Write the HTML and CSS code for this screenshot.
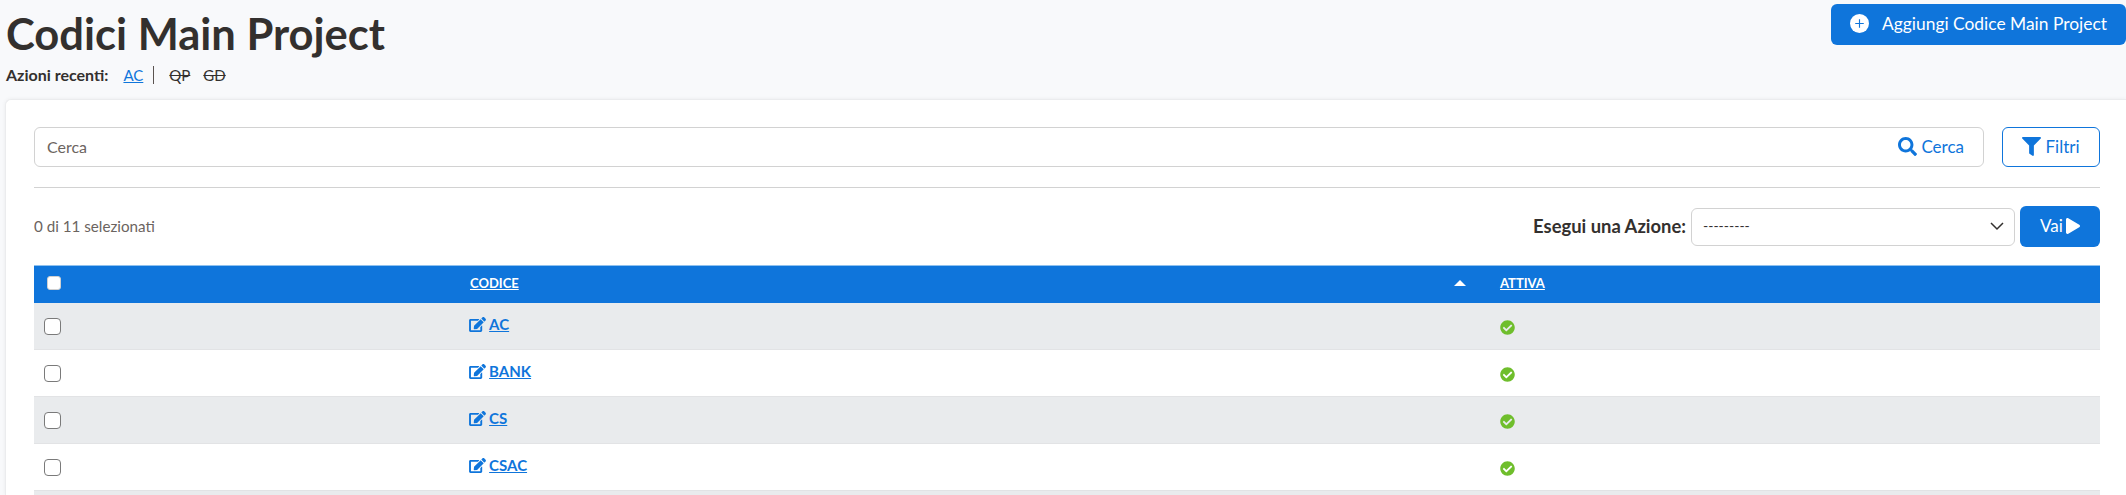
FILE: index.html
```html
<!DOCTYPE html>
<html lang="it">

<head>
    <meta charset="UTF-8">
    <title>Codici Main Project</title>
    <link rel="stylesheet" href="styles.css">
</head>

<body>
    <header class="page-head">
        <div class="page-title">
            <h1>Codici Main Project</h1>
            <div class="recent">
                <b>Azioni recenti:</b>
                <a href="#">AC</a>
                <span class="sep"></span>
                <s>QP</s>
                <s>GD</s>
            </div>
        </div>
        <a class="btn btn-add" href="#">
            <svg class="icon-plus" viewBox="0 0 20 20"><circle cx="10" cy="10" r="10" fill="#fff"/><path d="M10 5.500v9M5.500 10h9" stroke="#0f75db" stroke-width="1.200" fill="none"/></svg>
            Aggiungi Codice Main Project
        </a>
    </header>

    <main class="card">
        <div class="search-row">
            <div class="search-box">
                <span class="search-text">Cerca</span>
                <span class="search-go">
                    <svg class="icon" viewBox="0 0 512 512"><path d="M505 442.700L405.300 343c-4.500-4.500-10.600-7-17-7H372c27.600-35.300 44-79.700 44-128C416 93.100 322.900 0 208 0S0 93.100 0 208s93.100 208 208 208c48.300 0 92.700-16.400 128-44v16.300c0 6.400 2.500 12.500 7 17l99.700 99.700c9.400 9.400 24.600 9.400 33.900 0l28.300-28.300c9.400-9.400 9.400-24.600.1-34zM208 336c-70.700 0-128-57.200-128-128 0-70.700 57.200-128 128-128 70.700 0 128 57.200 128 128 0 70.700-57.200 128-128 128z"/></svg>
                    Cerca
                </span>
            </div>
            <a class="btn btn-filter" href="#">
                <svg class="icon" viewBox="0 0 512 512"><path d="M487.976 0H24.028C2.710 0-8.047 25.866 7.058 40.971L192 225.941V432c0 7.831 3.821 15.170 10.237 19.662l80 55.980C298.020 518.690 320 507.493 320 487.980V225.941l184.947-184.970C520.021 25.896 509.338 0 487.976 0z"/></svg>
                Filtri
            </a>
        </div>

        <div class="action-row">
            <span class="count">0 di 11 selezionati</span>
            <div class="action-form">
                <label for="azione">Esegui una Azione:</label>
                <select id="azione">
                    <option>---------</option>
                </select>
                <a class="btn btn-go" href="#">
                    Vai
                    <svg class="icon-play" viewBox="0 0 448 512"><path d="M424.400 214.700L72.400 6.600C43.800-10.300 0 6.100 0 47.900V464c0 37.500 40.700 60.100 72.400 41.300l352-208c31.400-18.500 31.500-64.100 0-82.600z"/></svg>
                </a>
            </div>
        </div>

        <table class="list">
            <colgroup>
                <col class="col-check">
                <col class="col-code">
                <col>
            </colgroup>
            <thead>
                <tr>
                    <th><input type="checkbox" class="check check-all"></th>
                    <th><div class="sort-cell"><a href="#">Codice</a><span class="caret"></span></div></th>
                    <th><a href="#">Attiva</a></th>
                </tr>
            </thead>
            <tbody>
                <tr>
                    <td><input type="checkbox" class="check"></td>
                    <td><a class="code-link" href="#"><svg class="icon-edit" viewBox="0 0 576 512"><path d="M402.600 83.200l90.200 90.200c3.800 3.800 3.800 10 0 13.800L274.400 405.600l-92.800 10.300c-12.400 1.400-22.900-9.100-21.500-21.500l10.300-92.800L388.800 83.200c3.800-3.800 10-3.800 13.800 0zm162-22.900l-48.800-48.800c-15.200-15.200-39.900-15.200-55.200 0l-35.400 35.400c-3.800 3.800-3.800 10 0 13.800l90.200 90.200c3.800 3.800 10 3.800 13.800 0l35.400-35.400c15.200-15.300 15.200-40 0-55.200zM384 346.200V448H64V128h229.800c3.200 0 6.200-1.300 8.500-3.500l40-40c7.600-7.600 2.200-20.500-8.500-20.500H48C21.500 64 0 85.500 0 112v352c0 26.500 21.500 48 48 48h352c26.500 0 48-21.500 48-48V306.200c0-10.700-12.900-16-20.500-8.500l-40 40c-2.200 2.300-3.500 5.300-3.500 8.500z"/></svg></a> <a class="code-link code-name" href="#">AC</a></td>
                    <td><svg class="icon-ok" viewBox="0 0 512 512"><path d="M504 256c0 136.967-111.033 248-248 248S8 392.967 8 256 119.033 8 256 8s248 111.033 248 248zM227.314 387.314l184-184c6.248-6.248 6.248-16.379 0-22.627l-22.627-22.627c-6.248-6.249-16.379-6.249-22.628 0L216 308.118l-70.059-70.059c-6.248-6.248-16.379-6.248-22.628 0l-22.627 22.627c-6.248 6.248-6.248 16.379 0 22.627l104 104c6.249 6.250 16.379 6.250 22.628.001z"/></svg></td>
                </tr>
                <tr>
                    <td><input type="checkbox" class="check"></td>
                    <td><a class="code-link" href="#"><svg class="icon-edit" viewBox="0 0 576 512"><path d="M402.600 83.200l90.200 90.200c3.800 3.800 3.800 10 0 13.800L274.400 405.600l-92.800 10.300c-12.400 1.400-22.900-9.100-21.500-21.500l10.300-92.800L388.800 83.200c3.800-3.800 10-3.800 13.800 0zm162-22.900l-48.800-48.800c-15.200-15.200-39.900-15.200-55.200 0l-35.400 35.400c-3.800 3.800-3.800 10 0 13.800l90.200 90.200c3.800 3.800 10 3.800 13.800 0l35.400-35.400c15.200-15.300 15.200-40 0-55.200zM384 346.200V448H64V128h229.800c3.200 0 6.200-1.300 8.500-3.500l40-40c7.600-7.600 2.200-20.500-8.500-20.500H48C21.500 64 0 85.500 0 112v352c0 26.500 21.500 48 48 48h352c26.500 0 48-21.500 48-48V306.200c0-10.700-12.900-16-20.500-8.500l-40 40c-2.200 2.300-3.500 5.300-3.500 8.500z"/></svg></a> <a class="code-link code-name" href="#">BANK</a></td>
                    <td><svg class="icon-ok" viewBox="0 0 512 512"><path d="M504 256c0 136.967-111.033 248-248 248S8 392.967 8 256 119.033 8 256 8s248 111.033 248 248zM227.314 387.314l184-184c6.248-6.248 6.248-16.379 0-22.627l-22.627-22.627c-6.248-6.249-16.379-6.249-22.628 0L216 308.118l-70.059-70.059c-6.248-6.248-16.379-6.248-22.628 0l-22.627 22.627c-6.248 6.248-6.248 16.379 0 22.627l104 104c6.249 6.250 16.379 6.250 22.628.001z"/></svg></td>
                </tr>
                <tr>
                    <td><input type="checkbox" class="check"></td>
                    <td><a class="code-link" href="#"><svg class="icon-edit" viewBox="0 0 576 512"><path d="M402.600 83.200l90.200 90.200c3.800 3.800 3.800 10 0 13.800L274.400 405.600l-92.800 10.300c-12.400 1.400-22.900-9.100-21.500-21.500l10.300-92.800L388.800 83.200c3.800-3.800 10-3.800 13.800 0zm162-22.900l-48.800-48.800c-15.200-15.200-39.900-15.200-55.200 0l-35.400 35.400c-3.800 3.800-3.800 10 0 13.800l90.200 90.200c3.800 3.800 10 3.800 13.800 0l35.400-35.400c15.200-15.300 15.200-40 0-55.200zM384 346.200V448H64V128h229.800c3.200 0 6.200-1.300 8.500-3.500l40-40c7.600-7.600 2.200-20.500-8.500-20.500H48C21.500 64 0 85.500 0 112v352c0 26.500 21.500 48 48 48h352c26.500 0 48-21.500 48-48V306.200c0-10.700-12.900-16-20.500-8.500l-40 40c-2.200 2.300-3.500 5.300-3.500 8.500z"/></svg></a> <a class="code-link code-name" href="#">CS</a></td>
                    <td><svg class="icon-ok" viewBox="0 0 512 512"><path d="M504 256c0 136.967-111.033 248-248 248S8 392.967 8 256 119.033 8 256 8s248 111.033 248 248zM227.314 387.314l184-184c6.248-6.248 6.248-16.379 0-22.627l-22.627-22.627c-6.248-6.249-16.379-6.249-22.628 0L216 308.118l-70.059-70.059c-6.248-6.248-16.379-6.248-22.628 0l-22.627 22.627c-6.248 6.248-6.248 16.379 0 22.627l104 104c6.249 6.250 16.379 6.250 22.628.001z"/></svg></td>
                </tr>
                <tr>
                    <td><input type="checkbox" class="check"></td>
                    <td><a class="code-link" href="#"><svg class="icon-edit" viewBox="0 0 576 512"><path d="M402.600 83.200l90.200 90.200c3.800 3.800 3.800 10 0 13.800L274.400 405.600l-92.800 10.300c-12.400 1.400-22.900-9.100-21.500-21.500l10.300-92.800L388.800 83.200c3.800-3.800 10-3.800 13.800 0zm162-22.900l-48.800-48.800c-15.200-15.200-39.900-15.200-55.200 0l-35.400 35.400c-3.800 3.800-3.800 10 0 13.800l90.200 90.200c3.800 3.800 10 3.800 13.800 0l35.400-35.400c15.200-15.300 15.200-40 0-55.200zM384 346.200V448H64V128h229.800c3.200 0 6.200-1.300 8.500-3.500l40-40c7.600-7.600 2.200-20.500-8.500-20.500H48C21.500 64 0 85.500 0 112v352c0 26.500 21.500 48 48 48h352c26.500 0 48-21.500 48-48V306.200c0-10.700-12.900-16-20.500-8.500l-40 40c-2.200 2.300-3.500 5.300-3.500 8.500z"/></svg></a> <a class="code-link code-name" href="#">CSAC</a></td>
                    <td><svg class="icon-ok" viewBox="0 0 512 512"><path d="M504 256c0 136.967-111.033 248-248 248S8 392.967 8 256 119.033 8 256 8s248 111.033 248 248zM227.314 387.314l184-184c6.248-6.248 6.248-16.379 0-22.627l-22.627-22.627c-6.248-6.249-16.379-6.249-22.628 0L216 308.118l-70.059-70.059c-6.248-6.248-16.379-6.248-22.628 0l-22.627 22.627c-6.248 6.248-6.248 16.379 0 22.627l104 104c6.249 6.250 16.379 6.250 22.628.001z"/></svg></td>
                </tr>
                <tr class="row-cut">
                    <td></td>
                    <td></td>
                    <td></td>
                </tr>
            </tbody>
        </table>
    </main>
</body>

</html>
```

FILE: styles.css
```css
html {
    overflow: hidden;
}

body {
    font-family: 'Lato', 'Liberation Sans', sans-serif;
    font-size: 16px;
    background-color: #f8f9fb;
    color: #33302e;
    margin: 0;
    height: 495px;
    overflow: hidden;
}

a {
    color: #0f75db;
}

.page-head {
    display: flex;
    justify-content: space-between;
    align-items: flex-start;
    height: 99px;
    padding: 4px 0 0 6px;
    box-sizing: border-box;
}

h1 {
    font-size: 43.500px;
    line-height: 50px;
    font-weight: 700;
    margin: 4px 0 0;
}

.recent {
    display: flex;
    align-items: center;
    font-size: 16px;
    line-height: 20px;
    margin-top: 7px;
}

.recent a {
    font-size: 15px;
    margin-left: 15px;
}

.recent s {
    font-size: 15px;
    margin-left: 15px;
}

.recent s + s {
    margin-left: 13px;
}

.recent .sep {
    width: 1px;
    height: 18px;
    background-color: #5a5350;
    margin-left: 10px;
}

.btn {
    display: flex;
    align-items: center;
    box-sizing: border-box;
    text-decoration: none;
    border-radius: 6px;
}

.btn-add {
    background-color: #0f75db;
    color: white;
    width: 295px;
    height: 41px;
    padding: 0 0 2px 19px;
    gap: 13px;
    font-size: 17.400px;
}

.icon-plus {
    width: 19px;
    height: 19px;
}

.card {
    background: white;
    border-top: 1px solid #ebecee;
    border-left: 1px solid #ebecee;
    border-top-left-radius: 6px;
    padding: 27px 26px 0 28px;
    margin-left: 5px;
    box-shadow: 0 0 4px rgba(0, 0, 0, 0.06);
}

.search-row {
    display: flex;
    justify-content: space-between;
    height: 60px;
    border-bottom: 1px solid #d2d2d2;
    box-sizing: content-box;
}

.search-box {
    display: flex;
    justify-content: space-between;
    align-items: center;
    box-sizing: border-box;
    width: 1950px;
    height: 40px;
    padding: 0 19px 2px 12px;
    border: 1px solid #d2d2d2;
    border-radius: 6px;
}

.search-text {
    color: #6b6460;
}

.search-go {
    display: flex;
    align-items: center;
    gap: 4px;
    color: #0f75db;
    font-size: 17px;
}

.icon {
    width: 19px;
    height: 19px;
    fill: #0f75db;
}

.btn-filter {
    justify-content: center;
    gap: 4px;
    width: 98px;
    height: 40px;
    padding-bottom: 2px;
    border: 1px solid #0f75db;
    color: #0f75db;
    font-size: 17px;
}

.action-row {
    display: flex;
    justify-content: space-between;
    align-items: center;
    height: 77px;
}

.count {
    color: #6b6460;
    font-size: 15.200px;
    padding-bottom: 2px;
}

.action-form {
    display: flex;
    align-items: center;
}

.action-form label {
    font-weight: 700;
    font-size: 18.400px;
    margin-right: 5px;
    padding-bottom: 2px;
}

select {
    appearance: none;
    width: 324px;
    height: 38px;
    padding: 0 11px 2px;
    border: 1px solid #d2d2d2;
    border-radius: 6px;
    font-family: inherit;
    font-size: 14px;
    color: #33302e;
    background: white url("data:image/svg+xml,%3Csvg xmlns='http://www.w3.org/2000/svg' viewBox='0 0 14 9'%3E%3Cpath d='M1 1l6 6 6-6' fill='none' stroke='%2333302e' stroke-width='1.500'/%3E%3C/svg%3E") no-repeat right 10px center / 14px 9px;
}

.btn-go {
    justify-content: center;
    gap: 3px;
    width: 80px;
    height: 41px;
    margin-left: 5px;
    padding-bottom: 2px;
    background-color: #0f75db;
    color: white;
    font-size: 17px;
}

.icon-play {
    width: 14px;
    height: 16px;
    fill: white;
}

.list {
    width: 2066px;
    table-layout: fixed;
    border-collapse: collapse;
}

.col-check {
    width: 424px;
}

.col-code {
    width: 1030px;
}

th {
    background-color: #0f75db;
    border-top: 1px solid #8fc1ee;
    height: 33px;
    padding: 0 12px 4px;
    text-align: left;
    font-size: 13px;
    text-transform: uppercase;
}

th a {
    color: white;
}

.sort-cell {
    display: flex;
    justify-content: space-between;
    align-items: center;
}

.caret {
    width: 0;
    height: 0;
    border-left: 6px solid transparent;
    border-right: 6px solid transparent;
    border-bottom: 6px solid white;
    margin-right: 10px;
}

td {
    height: 46px;
    padding: 0 12px;
    border-bottom: 1px solid #e2e3e5;
}

tbody tr:nth-child(odd) {
    background-color: #e9ebed;
}

.row-cut td {
    height: 4px;
    border-bottom: none;
}

.check {
    appearance: none;
    display: block;
    width: 17px;
    height: 17px;
    margin: 0 0 0 -2px;
    background: white;
    border: 1px solid #7a7a7a;
    border-radius: 4px;
}

.check-all {
    width: 14px;
    height: 14px;
    margin-left: 1px;
    border-color: #d0d0d0;
    border-radius: 3px;
}

.code-link {
    font-weight: 700;
    font-size: 15px;
    position: relative;
    top: -3px;
    left: -1px;
}

.code-name {
    margin-left: -1px;
}

.icon-edit {
    width: 17px;
    height: 15px;
    fill: #0f75db;
    vertical-align: -2px;
}

.icon-ok {
    display: block;
    width: 15px;
    height: 15px;
    margin-top: 3px;
    fill: #6fbe2c;
}
```
